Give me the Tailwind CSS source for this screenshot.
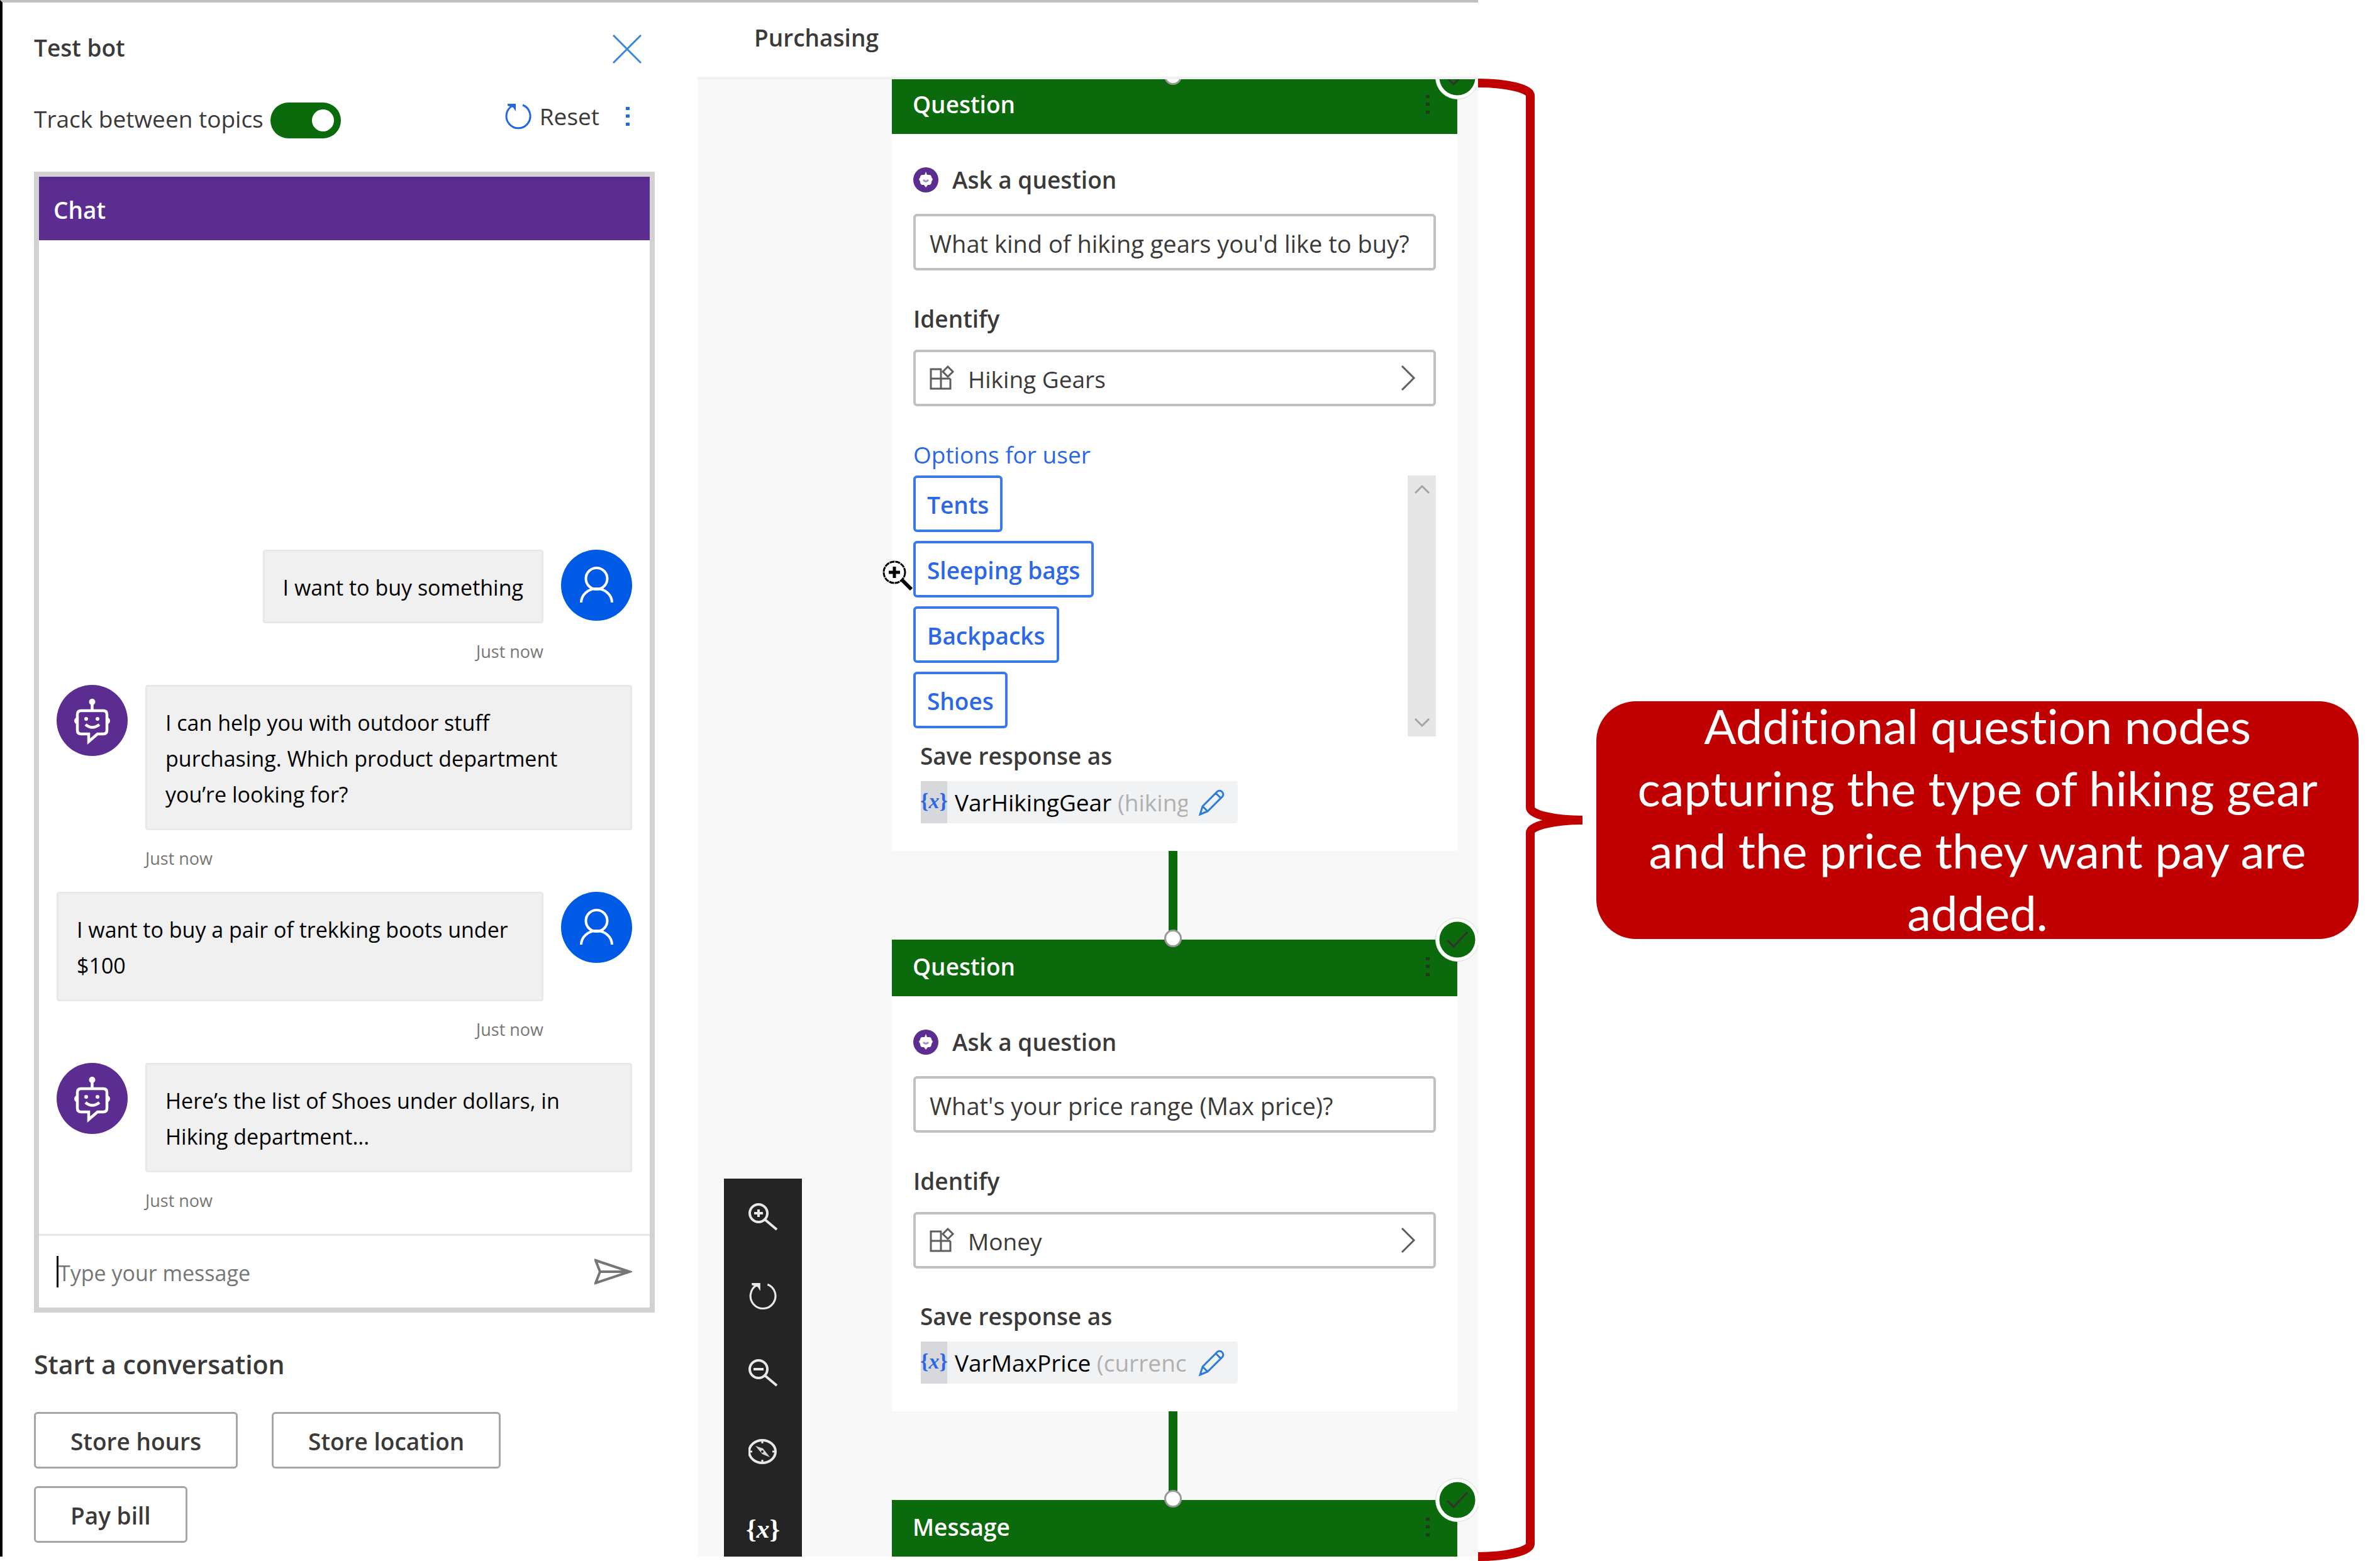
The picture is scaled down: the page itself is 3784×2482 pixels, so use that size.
<!DOCTYPE html>
<html lang="en">
<head>
<meta charset="utf-8">
<title>Test bot</title>
<script src="https://cdn.jsdelivr.net/npm/@tailwindcss/browser@4"></script>
</head>
<body class="bg-white font-['Open_Sans',sans-serif] text-[37px] text-[#3b3a39]">
<svg class="hidden" aria-hidden="true">
  <symbol id="user" viewBox="0 0 113 113"><circle cx="56.500" cy="56.500" r="56.500" fill="#005ae6"/><g fill="none" stroke="#fff" stroke-width="4"><circle cx="56.500" cy="46" r="17"/><path d="M32 84a24.500 22 0 0 1 49 0"/></g></symbol>
  <symbol id="bot" viewBox="0 0 113 113"><circle cx="56.500" cy="56.500" r="56.500" fill="#5c2d91"/><g fill="none" stroke="#fff" stroke-width="4.500"><path d="M39 41h35q6 0 6 6v25q0 6-6 6H65L51 90V78H39q-6 0-6-6V47q0-6 6-6zM56.500 41V28"/><path d="M46 63q10.500 9 22 0"/></g><path d="M33 51q-5 2-5 6t5 6zM80 51q5 2 5 6t-5 6z" fill="#fff"/><circle cx="56.500" cy="27" r="5" fill="#fff"/><circle cx="47" cy="54" r="3" fill="#fff"/><circle cx="65" cy="54" r="3" fill="#fff"/></symbol>
  <symbol id="minibot" viewBox="0 0 40 40"><circle cx="20" cy="20" r="20" fill="#5c2d91"/><path d="M20 7l2 5h3q4 0 4 4l2 3-2 4q0 5-4 5h-2l-3 4-3-4h-2q-4 0-4-5l-2-4 2-3q0-4 4-4h3z" fill="#fff"/><path d="M16 20q4 5 8 0" fill="none" stroke="#a78bc6" stroke-width="3"/></symbol>
  <symbol id="reset" viewBox="0 0 44 44"><path d="M29 4A19 19 0 1 1 13 5" fill="none" stroke="currentColor" stroke-width="3"/><path d="M5 2h13v12l-4-6-9-3z" fill="currentColor"/></symbol>
  <symbol id="entity" viewBox="0 0 40 40"><g fill="none" stroke="#605e5c" stroke-width="3"><path d="M19 6H2v31h31V21M2 21h31M18 6v31"/><path d="M29 2l8 8-8 8-8-8z"/></g></symbol>
  <symbol id="chevron" viewBox="0 0 24 42"><path d="M2 2l19 19L2 40" fill="none" stroke="#605e5c" stroke-width="3"/></symbol>
  <symbol id="pencil" viewBox="0 0 42 42"><g fill="none" stroke="#2b7cd9" stroke-width="3"><path d="M2 40l4-13L30 3q4-2 7 1t1 7L14 35zM27 6l9 9M6 27l8 8"/></g></symbol>
  <symbol id="check" viewBox="0 0 72 72"><circle cx="36" cy="36" r="34.500" fill="#fff" stroke="#cfe3cf" stroke-width="1"/><circle cx="36" cy="36" r="28.500" fill="#0b6a0b"/><path d="M20 37l10 10 22-23" fill="none" stroke="#323130" stroke-width="3"/></symbol>
  <symbol id="dots" viewBox="0 0 8 32"><path d="M1 1h6v5H1zM1 13h6v5H1zM1 26h6v5H1z" fill="currentColor"/></symbol>
</svg>

<div class="flex w-full items-start">
  <!-- Test bot panel -->
  <aside class="w-[1109px] shrink-0 border-t-[4px] border-l-[4px] border-t-[#c0c0c0] border-l-black bg-white pr-[68px] pb-[22px] pl-[50px]">
    <div class="flex h-[147px] items-center justify-between pr-[21px]">
      <h1 class="pb-[4px] font-semibold">Test bot</h1>
      <button aria-label="Close"><svg class="size-[46px]" viewBox="0 0 46 46"><path d="M1 1l44 44M45 1L1 45" stroke="#3a86dd" stroke-width="3"/></svg></button>
    </div>
    <div class="mb-[42px] flex h-[80px] items-center justify-between pr-[39px]">
      <label class="flex items-center gap-[11px]"><span class="pb-[4px]">Track between topics</span>
        <input type="checkbox" checked class="sr-only">
        <span class="flex h-[57px] w-[112px] items-center justify-end rounded-full bg-[#0b6a0b] pr-[11px]"><span class="size-[35px] rounded-full bg-white"></span></span>
      </label>
      <div class="flex items-center pb-[12px] text-[#1f6ce0]">
        <button class="flex items-center gap-[12px]"><svg class="size-[44px] text-[#2266e3]"><use href="#reset"/></svg><span class="text-[#3b3a39]">Reset</span></button>
        <button aria-label="More" class="ml-[41px]"><svg class="h-[32px] w-[8px]"><use href="#dots"/></svg></button>
      </div>
    </div>

    <section class="border-8 border-[#d2d2d2] text-black">
      <h2 class="flex h-[101px] items-center bg-[#5c2d91] pt-[4px] pl-[23px] font-semibold text-white">Chat</h2>
      <div class="flex h-[1580px] flex-col justify-end px-[28px] text-[34px] leading-[57px]">
        <div class="flex items-start justify-end gap-[28px]">
          <p class="rounded-[4px] border-[3px] border-[#e8e8e8] bg-[#f0f0f0] px-[29px] pt-[29px] pb-[25px]">I want to buy something</p>
          <svg class="size-[113px] shrink-0"><use href="#user"/></svg>
        </div>
        <p class="mr-[141px] mb-[8px] text-right text-[27px] leading-[90px] text-[#767676]">Just now</p>
        <div class="flex items-start gap-[28px]">
          <svg class="size-[113px] shrink-0"><use href="#bot"/></svg>
          <p class="grow rounded-[4px] border-[3px] border-[#e8e8e8] bg-[#f0f0f0] px-[29px] pt-[29px] pb-[25px]">I can help you with outdoor stuff<br>purchasing. Which product department<br>you’re looking for?</p>
        </div>
        <p class="mb-[8px] ml-[141px] text-[27px] leading-[90px] text-[#767676]">Just now</p>
        <div class="flex items-start gap-[28px]">
          <p class="grow rounded-[4px] border-[3px] border-[#e8e8e8] bg-[#f0f0f0] px-[29px] pt-[29px] pb-[25px]">I want to buy a pair of trekking boots under $100</p>
          <svg class="size-[113px] shrink-0"><use href="#user"/></svg>
        </div>
        <p class="mr-[141px] mb-[8px] text-right text-[27px] leading-[90px] text-[#767676]">Just now</p>
        <div class="flex items-start gap-[28px]">
          <svg class="size-[113px] shrink-0"><use href="#bot"/></svg>
          <p class="grow rounded-[4px] border-[3px] border-[#e8e8e8] bg-[#f0f0f0] px-[29px] pt-[29px] pb-[25px]">Here’s the list of Shoes under dollars, in<br>Hiking department...</p>
        </div>
        <p class="mb-[8px] ml-[141px] text-[27px] leading-[90px] text-[#767676]">Just now</p>
      </div>
      <form class="flex h-[117px] items-center border-t-[3px] border-[#e6e6e6] px-[28px]">
        <span class="h-[50px] w-[3px] bg-black"></span>
        <input aria-label="Type your message" placeholder="Type your message" class="min-w-0 grow pt-[4px] text-[34px] outline-none placeholder:text-[#767676]">
        <button type="button" aria-label="Send"><svg class="h-[42px] w-[60px]" viewBox="0 0 60 42"><path d="M2 3l54 18L2 39l7-18zM9 21h47" fill="none" stroke="#767676" stroke-width="4"/></svg></button>
      </form>
    </section>

    <h2 class="mt-[52px] text-[41px] leading-[60px] font-semibold">Start a conversation</h2>
    <div class="mt-[46px] flex flex-wrap gap-x-[54px] gap-y-[28px] font-semibold">
      <button class="h-[90px] rounded-[6px] border-[3px] border-[#a5a5a5] px-[55px] pt-[4px]">Store hours</button>
      <button class="h-[90px] rounded-[6px] border-[3px] border-[#a5a5a5] px-[55px] pt-[4px]">Store location</button>
      <button class="h-[90px] rounded-[6px] border-[3px] border-[#a5a5a5] px-[55px] pt-[4px]">Pay bill</button>
    </div>
  </aside>

  <!-- Authoring canvas -->
  <main class="relative w-[1241px] shrink-0 border-t-[4px] border-[#c0c0c0]">
    <h1 class="flex h-[122px] items-center border-b-[4px] border-[#f0f0f2] pb-[6px] pl-[90px] font-semibold">Purchasing</h1>
    <div class="h-[2349px] overflow-hidden bg-[#f8f8f8] pr-[33px] pl-[309px]">
      <article class="relative -mt-[3px] bg-white">
        <header class="flex h-[90px] items-center justify-between bg-[#0b6a0b] pr-[43px] pb-[4px] pl-[33px] font-semibold text-white">Question<svg class="h-[32px] w-[8px] text-[#1f3a1f]"><use href="#dots"/></svg></header>
        <span class="absolute -top-[16px] left-[433px] size-[28px] rounded-full border-[3px] border-[#999] bg-white"></span>
        <svg class="absolute -top-[36px] -right-[36px] size-[72px]"><use href="#check"/></svg>
        <div class="px-[34px] pb-[44px]">
          <label for="q1" class="flex h-[103px] items-center gap-[22px] pt-[43px] font-semibold"><svg class="size-[40px]"><use href="#minibot"/></svg>Ask a question</label>
          <input id="q1" value="What kind of hiking gears you'd like to buy?" class="mt-[24px] block h-[90px] w-full rounded-[6px] border-[4px] border-[#c3c1bf] px-[22px] pt-[4px] text-[38px] outline-none">
          <h3 class="mt-[52px] leading-[50px] font-semibold">Identify</h3>
          <button class="mt-[24px] flex h-[90px] w-full items-center rounded-[6px] border-[4px] border-[#c3c1bf] pr-[28px] pl-[22px]"><svg class="mr-[21px] size-[40px]"><use href="#entity"/></svg><span class="pt-[4px]">Hiking Gears</span><svg class="ml-auto h-[42px] w-[24px]"><use href="#chevron"/></svg></button>
          <a href="#" class="mt-[50px] block leading-[54px] text-[#2b67e6]">Options for user</a>
          <div class="mt-[6px] flex h-[415px] justify-between">
            <div class="flex flex-col items-start gap-[14px] font-semibold text-[#2b67e6]">
              <button class="h-[90px] rounded-[6px] border-[4px] border-[#3b78ea] px-[18px] pt-[4px]">Tents</button>
              <button class="h-[90px] rounded-[6px] border-[4px] border-[#3b78ea] px-[18px] pt-[4px]">Sleeping bags</button>
              <button class="h-[90px] rounded-[6px] border-[4px] border-[#3b78ea] px-[18px] pt-[4px]">Backpacks</button>
              <button class="h-[90px] rounded-[6px] border-[4px] border-[#3b78ea] px-[18px] pt-[4px]">Shoes</button>
            </div>
            <div class="flex w-[45px] flex-col items-center justify-between bg-[#e6e6e6] py-[14px]">
              <svg class="h-[16px] w-[26px]" viewBox="0 0 26 16"><path d="M2 14L13 3l11 11" fill="none" stroke="#a3a3a3" stroke-width="3"/></svg>
              <svg class="h-[16px] w-[26px]" viewBox="0 0 26 16"><path d="M2 2l11 11L24 2" fill="none" stroke="#a3a3a3" stroke-width="3"/></svg>
            </div>
          </div>
          <h3 class="mt-[5px] ml-[11px] leading-[52px] font-semibold">Save response as</h3>
          <button class="mt-[14px] ml-[12px] flex h-[67px] w-[504px] items-center rounded-[4px] bg-[#f0f2f4] text-left">
            <span class="flex h-full w-[42px] items-center justify-center bg-[#d6d8dc] pb-[4px] font-['Liberation_Serif',serif] text-[34px] font-bold text-[#2b67e6]">{<i>x</i>}</span>
            <span class="ml-[12px] w-[370px] overflow-hidden whitespace-nowrap text-black">VarHikingGear <span class="text-[#b0b0b0]">(hiking</span></span>
            <svg class="ml-[18px] size-[42px]"><use href="#pencil"/></svg>
          </button>
        </div>
      </article>
      <div class="ml-[440px] h-[141px] w-[14px] bg-[#0b6a0b]"></div>
      <article class="relative bg-white">
        <header class="flex h-[90px] items-center justify-between bg-[#0b6a0b] pr-[43px] pb-[4px] pl-[33px] font-semibold text-white">Question<svg class="h-[32px] w-[8px] text-[#1f3a1f]"><use href="#dots"/></svg></header>
        <span class="absolute -top-[16px] left-[433px] size-[28px] rounded-full border-[3px] border-[#999] bg-white"></span>
        <svg class="absolute -top-[36px] -right-[36px] size-[72px]"><use href="#check"/></svg>
        <div class="px-[34px] pb-[44px]">
          <label for="q2" class="flex h-[103px] items-center gap-[22px] pt-[43px] font-semibold"><svg class="size-[40px]"><use href="#minibot"/></svg>Ask a question</label>
          <input id="q2" value="What's your price range (Max price)?" class="mt-[24px] block h-[90px] w-full rounded-[6px] border-[4px] border-[#c3c1bf] px-[22px] pt-[4px] text-[38px] outline-none">
          <h3 class="mt-[52px] leading-[50px] font-semibold">Identify</h3>
          <button class="mt-[24px] flex h-[90px] w-full items-center rounded-[6px] border-[4px] border-[#c3c1bf] pr-[28px] pl-[22px]"><svg class="mr-[21px] size-[40px]"><use href="#entity"/></svg><span class="pt-[4px]">Money</span><svg class="ml-auto h-[42px] w-[24px]"><use href="#chevron"/></svg></button>
          <h3 class="mt-[50px] ml-[11px] leading-[52px] font-semibold">Save response as</h3>
          <button class="mt-[14px] ml-[12px] flex h-[67px] w-[504px] items-center rounded-[4px] bg-[#f0f2f4] text-left">
            <span class="flex h-full w-[42px] items-center justify-center bg-[#d6d8dc] pb-[4px] font-['Liberation_Serif',serif] text-[34px] font-bold text-[#2b67e6]">{<i>x</i>}</span>
            <span class="ml-[12px] w-[370px] overflow-hidden whitespace-nowrap text-black">VarMaxPrice <span class="text-[#b0b0b0]">(currenc</span></span>
            <svg class="ml-[18px] size-[42px]"><use href="#pencil"/></svg>
          </button>
        </div>
      </article>
      <div class="ml-[440px] h-[141px] w-[14px] bg-[#0b6a0b]"></div>
      <article class="relative">
        <header class="flex h-[90px] items-center justify-between bg-[#0b6a0b] pr-[43px] pb-[4px] pl-[33px] font-semibold text-white">Message<svg class="h-[32px] w-[8px] text-[#1f3a1f]"><use href="#dots"/></svg></header>
        <span class="absolute -top-[16px] left-[433px] size-[28px] rounded-full border-[3px] border-[#999] bg-white"></span>
        <svg class="absolute -top-[36px] -right-[36px] size-[72px]"><use href="#check"/></svg>
      </article>
    </div>

    <nav class="absolute bottom-0 left-[42px] flex h-[601px] w-[124px] flex-col items-center gap-[77px] bg-[#242424] pt-[39px] text-white" aria-label="Canvas tools">
      <button aria-label="Zoom in"><svg class="size-[48px]" viewBox="0 0 48 48"><g fill="none" stroke="#e8e8e8" stroke-width="4"><circle cx="17" cy="16" r="14"/><path d="M27 26l19 16M10 16h14M17 10v12"/></g></svg></button>
      <button aria-label="Reset view"><svg class="size-[46px] text-[#e8e8e8]"><use href="#reset"/></svg></button>
      <button aria-label="Zoom out"><svg class="size-[48px]" viewBox="0 0 48 48"><g fill="none" stroke="#e8e8e8" stroke-width="4"><circle cx="17" cy="16" r="14"/><path d="M27 26l19 16M9 16h16"/></g></svg></button>
      <button aria-label="Navigator"><svg class="size-[46px]" viewBox="0 0 46 46"><ellipse cx="22" cy="22" rx="21" ry="18" fill="none" stroke="#e8e8e8" stroke-width="4"/><path d="M11 13l12 4 11 14-12-5z" fill="#d8d8d8"/><path d="M22 4v5M22 35v5M2 22h4M38 22h5" stroke="#e8e8e8" stroke-width="3"/><circle cx="22" cy="22" r="2" fill="#242424"/></svg></button>
      <button aria-label="Variables" class="font-['Liberation_Serif',serif] text-[42px] leading-[44px] font-bold">{<i>x</i>}</button>
    </nav>

    <!-- Zoom cursor -->
    <svg class="absolute top-[886px] left-[294px] size-[50px]" viewBox="0 0 50 50"><circle cx="19" cy="20" r="17" fill="#fff" stroke="#000" stroke-width="3" stroke-dasharray="8 1"/><path d="M19 11v18M10 20h18" stroke="#000" stroke-width="5"/><path d="M31 32l15 15" stroke="#000" stroke-width="6"/></svg>
  </main>

  <!-- Annotation -->
  <svg class="h-[2482px] w-[166px] shrink-0" viewBox="0 0 166 2482"><path d="M0 132A83 20 0 0 1 83 152V1284A83 20 0 0 0 166 1304A83 20 0 0 0 83 1324V2455A83 20 0 0 1 0 2475" fill="none" stroke="#c00000" stroke-width="14"/></svg>
  <div class="mt-[126px] mr-[34px] ml-[22px] flex min-w-0 flex-1 items-center justify-center self-center rounded-[63px] bg-[#c00000] text-center font-['Lato',sans-serif] text-[76px] leading-[99px] text-white [font-variant-ligatures:none]">
    <p class="-mt-[11px] -mb-[7px]">Additional question nodes<br>capturing the type of hiking gear<br>and the price they want pay are<br>added.</p>
  </div>
</div>
</body>
</html>
